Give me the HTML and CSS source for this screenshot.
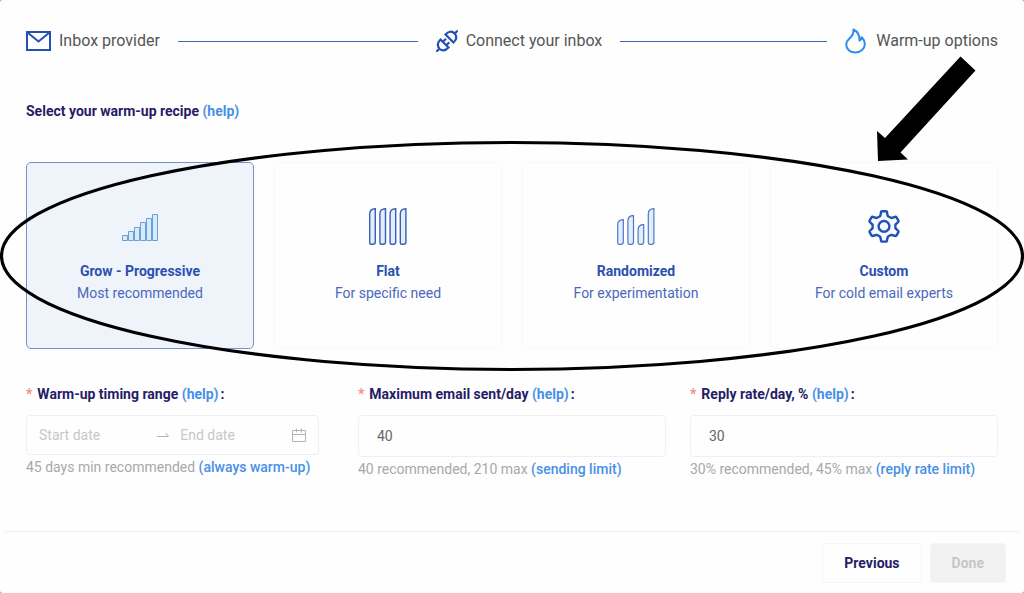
FILE: index.html
```html
<!DOCTYPE html>
<html lang="en">
<head>
<meta charset="utf-8">
<meta name="viewport" content="width=device-width, initial-scale=1">
<title>Warm-up options</title>
<link rel="stylesheet" href="styles.css">
</head>
<body>
<form class="modal">
  <main class="content">
    <ol class="steps">
      <li class="step">
        <svg class="step-icon" width="25" height="20" viewBox="0 0 25 20" fill="none" stroke="#2450b4" stroke-width="2" aria-hidden="true"><path d="M1 1h23v18H1zM1.500 1.500 12.500 10.500 23.500 1.500"/></svg>
        <span>Inbox provider</span>
      </li>
      <li class="step">
        <svg class="step-icon" width="22" height="22" viewBox="0 0 22 22" fill="none" stroke="#2450b4" stroke-width="2.200" stroke-linecap="round" aria-hidden="true"><path d="M9.500 4.500 17.500 12.500C20.500 9.800 21 6.500 18.800 3.600 15.800.6 12.300 1.300 9.500 4.500zM18.800 3.600 21 1.200M4.500 9.500 12.500 17.500C9.500 20.700 6 21 3.400 18.700 1 15.800 1.600 12.500 4.500 9.500zM3.400 18.700 1 21M6.700 11.700 9.400 9.500M10.300 15.300 12.600 12.900"/></svg>
        <span>Connect your inbox</span>
      </li>
      <li class="step">
        <svg class="step-icon" width="21" height="26" viewBox="0 0 21 26" fill="none" stroke="#2b8ee8" stroke-width="2" stroke-linejoin="round" aria-hidden="true"><path d="M8.400 1.500C8.900 5.500 7 8.300 4.200 10.700 2.200 12.500 1.200 14.100 1.200 16.200 1.200 21 5 24.500 10.300 24.500S19.800 20.800 19.800 16c0-2.800-1-4.800-3-6.800C16.700 11 16 12 14.500 12.600 14.800 7.500 12.600 3.500 8.400 1.500z"/></svg>
        <span>Warm-up options</span>
      </li>
    </ol>

    <h1 class="title">Select your warm-up recipe <a href="#recipe-help">(help)</a></h1>

    <div class="recipes" role="radiogroup" aria-label="Warm-up recipe">
      <label class="card">
        <input class="card-input" type="radio" name="recipe" value="grow" checked>
        <svg class="card-icon" width="40" height="40" viewBox="0 0 40 40" fill="#d9eafa" stroke="#6aa0d8" aria-hidden="true"><path d="M2.500 29.500h5v5h-5zM8.500 25.500h5v9h-5zM14.500 21.500h5v13h-5zM20.500 16.500h5v18h-5zM26.500 12.500h5v22h-5zM32.500 8.500h5v26h-5z"/></svg>
        <strong class="card-name">Grow - Progressive</strong>
        <span>Most recommended</span>
      </label>
      <label class="card">
        <input class="card-input" type="radio" name="recipe" value="flat">
        <svg class="card-icon" width="40" height="40" viewBox="0 0 40 40" fill="#e4eefb" stroke="#3560b8" stroke-width="1.400" aria-hidden="true"><path d="M1.700 8C1.700 4.500 3.500 2.700 7.300 2.700V36c0 1.500-.8 2.300-2.300 2.300H3.200c-1 0-1.500-.5-1.500-1.500zM11.900 8c0-3.500 1.800-5.300 5.600-5.300V36c0 1.500-.8 2.300-2.300 2.300h-1.800c-1 0-1.500-.5-1.500-1.500zM22.100 8c0-3.500 1.800-5.300 5.600-5.300V36c0 1.500-.8 2.300-2.300 2.300h-1.800c-1 0-1.500-.5-1.500-1.500zM32.300 8c0-3.500 1.800-5.300 5.600-5.300V36c0 1.500-.8 2.300-2.300 2.300h-1.800c-1 0-1.500-.5-1.500-1.500z"/></svg>
        <strong class="card-name">Flat</strong>
        <span>For specific need</span>
      </label>
      <label class="card">
        <input class="card-input" type="radio" name="recipe" value="randomized">
        <svg class="card-icon" width="40" height="40" viewBox="0 0 40 40" fill="#e4eefb" stroke="#4c78c4" stroke-width="1.200" aria-hidden="true"><path d="M1.700 19c0-3.500 1.800-5.300 5.600-5.300V36c0 1.500-.8 2.300-2.300 2.300H3.200c-1 0-1.500-.5-1.500-1.500zM11.900 15c0-3.500 1.800-5.300 5.600-5.300V36c0 1.500-.8 2.300-2.300 2.300h-1.800c-1 0-1.500-.5-1.500-1.500zM22.100 24c0-3.500 1.800-5.300 5.600-5.300V36c0 1.500-.8 2.300-2.300 2.300h-1.800c-1 0-1.500-.5-1.500-1.500zM32.300 8c0-3.500 1.800-5.300 5.600-5.300V36c0 1.500-.8 2.300-2.300 2.300h-1.800c-1 0-1.500-.5-1.500-1.500z"/></svg>
        <strong class="card-name">Randomized</strong>
        <span>For experimentation</span>
      </label>
      <label class="card">
        <input class="card-input" type="radio" name="recipe" value="custom">
        <svg class="card-icon" width="40" height="40" viewBox="0 0 40 40" fill="#f3f9ff" stroke="#2450b4" stroke-width="2.400" stroke-linejoin="round" aria-hidden="true"><path d="M17.200 5.600Q17.400 5.200 18 5.200h4q.6 0 .8.400l.8 4 .8.900 3 1.500 3.900-1.200q.7-.1 1.100.4l2 3.500q.3.600-.1 1.100l-2.900 2.800v3.600l2.900 2.800q.4.500.1 1.100l-2 3.500q-.4.500-1.100.4l-3.900-1.200-3 1.500-.8.900-.8 4q-.2.400-.8.400h-4q-.6 0-.8-.4l-.8-4-.8-.9-3-1.500-3.900 1.200q-.7.100-1.100-.4l-2-3.500q-.3-.6.100-1.100l2.900-2.800v-3.600l-2.900-2.800q-.4-.5-.1-1.100l2-3.500q.4-.5 1.100-.4l3.900 1.200 3-1.500.8-.9z"/><circle cx="20" cy="20.400" r="5.400"/></svg>
        <strong class="card-name">Custom</strong>
        <span>For cold email experts</span>
      </label>
    </div>

    <div class="fields">
      <div class="field">
        <div class="field-label"><span class="required">*</span><label for="start-date">Warm-up timing range</label> <a href="#range-help">(help)</a><span class="colon">:</span></div>
        <div class="range">
          <input class="range-input" id="start-date" type="text" placeholder="Start date">
          <svg class="range-arrow" width="14" height="8" viewBox="0 0 14 8" fill="none" stroke="#b4b4b4" aria-hidden="true"><path d="M1 5.500h11.500L9.500 2"/></svg>
          <input class="range-input" type="text" placeholder="End date" aria-label="End date">
          <svg width="14" height="14" viewBox="0 0 14 14" fill="none" stroke="#b4b4b4" aria-hidden="true"><path d="M.5 2.500h13v11H.5zM.5 6.500h13M4.500.5v4M9.500.5v4"/></svg>
        </div>
        <p class="hint">45 days min recommended <a href="#always">(always warm-up)</a></p>
      </div>
      <div class="field">
        <div class="field-label"><span class="required">*</span><label for="max-sent">Maximum email sent/day</label> <a href="#max-help">(help)</a><span class="colon">:</span></div>
        <input class="number" id="max-sent" type="text" inputmode="numeric" value="40">
        <p class="hint">40 recommended, 210 max <a href="#sending-limit">(sending limit)</a></p>
      </div>
      <div class="field">
        <div class="field-label"><span class="required">*</span><label for="reply-rate">Reply rate/day, %</label> <a href="#rate-help">(help)</a><span class="colon">:</span></div>
        <input class="number" id="reply-rate" type="text" inputmode="numeric" value="30">
        <p class="hint">30% recommended, 45% max <a href="#rate-limit">(reply rate limit)</a></p>
      </div>
    </div>
  </main>

  <footer class="footer">
    <button class="button" type="button">Previous</button>
    <button class="button" type="submit" disabled>Done</button>
  </footer>

  <svg class="annotation" viewBox="0 0 1024 593" preserveAspectRatio="none" aria-hidden="true">
    <ellipse cx="512" cy="256" rx="510.500" ry="113.500" fill="none" stroke="#000" stroke-width="3.200"/>
    <path d="M960.500 56.500 975.500 70.500 900.500 152.500 908 159.500 878 161 877 131 885 138z"/>
  </svg>
</form>
</body>
</html>
```

FILE: styles.css
```css
* {
  box-sizing: border-box;
}

body {
  margin: 0;
  background: #b0b0b0;
  font-family: Roboto, "Liberation Sans", sans-serif;
  font-size: 14px;
  line-height: 22px;
}

a {
  color: #4790e8;
  font-weight: inherit;
  text-decoration: none;
}

.modal {
  position: relative;
  display: flex;
  flex-direction: column;
  min-height: 100vh;
  background: #fefefe;
  border-radius: 3px;
}

.content {
  flex: 1;
  padding: 26px 26px 0;
}

.steps {
  display: flex;
  margin: 0;
  padding: 0;
  list-style: none;
  color: #555;
  font-size: 16px;
  line-height: 30px;
}

.step {
  display: flex;
  flex: 1;
  align-items: center;
  gap: 8px;
  white-space: nowrap;
}

.step:last-child {
  flex: none;
  gap: 10px;
}

.step:not(:last-child)::after {
  content: "";
  flex: 1;
  height: 1px;
  margin: 0 18px 0 10px;
  background: #3c68bc;
}

.step-icon {
  flex: none;
}

.title {
  margin: 44px 0 40px;
  color: #261c66;
  font-size: 14px;
  font-weight: 700;
  line-height: 22px;
}

.recipes {
  display: grid;
  grid-template-columns: repeat(4, 1fr);
  gap: 20px;
}

.card {
  display: flex;
  flex-direction: column;
  align-items: center;
  padding: 43px 8px 44px;
  border: 1px solid #f6f8f9;
  border-radius: 5px;
  color: #4a68bc;
  cursor: pointer;
}

.card:has(:checked) {
  background: #eff4fa;
  border-color: #7590cc;
}

.card-input {
  position: absolute;
  opacity: 0;
  pointer-events: none;
}

.card-icon {
  margin-bottom: 14px;
}

.card-name {
  color: #2c50b2;
  font-weight: 700;
}

.fields {
  display: grid;
  grid-template-columns: repeat(3, 1fr);
  gap: 24px;
  margin-top: 34px;
}

.field-label {
  margin-bottom: 10px;
  color: #261c66;
  font-weight: 700;
}

.required {
  margin-right: 5px;
  color: #f38b8d;
}

.colon {
  margin-left: 2px;
}

.range {
  display: flex;
  align-items: center;
  width: 95%;
  height: 40px;
  padding: 0 12px;
  border: 1px solid #efefef;
  border-radius: 4px;
}

.range-input {
  flex: 1;
  width: 0;
  min-width: 0;
  padding: 0;
  border: 0;
  background: none;
  color: #666;
  font: inherit;
}

.range-input::placeholder {
  color: #c8c8c8;
}

.range-arrow {
  flex: none;
  margin: 0 10px 0 6px;
}

.number {
  display: block;
  width: 100%;
  height: 42px;
  padding: 0 18px;
  border: 1px solid #efefef;
  border-radius: 4px;
  background: none;
  color: #666;
  font: inherit;
}

.hint {
  margin: 1px 0 0;
  color: #a8a8a8;
}

.hint a {
  font-weight: 500;
}

.footer {
  display: flex;
  justify-content: flex-end;
  gap: 8px;
  margin: 0 4px;
  padding: 11px 14px 10px;
  border-top: 1px solid #f1f1f1;
}

.button {
  height: 40px;
  padding: 0 21px;
  border: 1px solid #f5f5f6;
  border-radius: 4px;
  background: #fefefe;
  color: #261c66;
  font: inherit;
  font-weight: 700;
}

.button:disabled {
  background: #f2f2f3;
  color: #c6c6c8;
}

.annotation {
  position: absolute;
  inset: 0;
  width: 100%;
  height: 100%;
  pointer-events: none;
}
```
